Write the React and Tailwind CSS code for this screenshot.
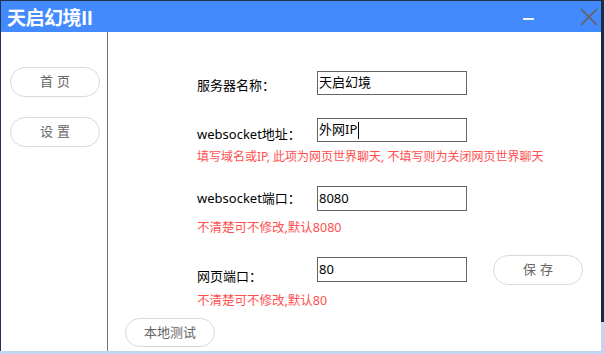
export default function App() {
  const font = { fontFamily: '"Noto Sans", "Noto Sans CJK SC", sans-serif' };
  return (
    <div className="w-[604px] h-[354px] bg-[#c3d4f1] relative overflow-hidden" style={font}>
      <div className="absolute right-0 top-0 w-[3px] h-[322px] bg-[#1d2a44]"></div>
      <div className="w-[601px] h-[351px] flex flex-col bg-white border-l border-t border-[#23314d]">
        {/* title bar */}
        <div className="h-[31px] bg-[#448aff] flex items-center shrink-0">
          <div className="pl-[6px] text-white font-bold text-[19px] leading-none tracking-[-0.5px] font-['Noto_Sans_CJK_SC',sans-serif]">天启幻境II</div>
          <div className="ml-auto mr-[46px] w-[11px] h-[2px] bg-[#f2f4f8] mt-[4px]"></div>
          <svg className="mr-[3px]" width="18" height="18" viewBox="0 0 18 18">
            <path d="M1 1 L17 17 M17 1 L1 17" stroke="#5f6670" strokeWidth="1.8" fill="none" />
          </svg>
        </div>
        <div className="flex flex-1 min-h-0">
          {/* sidebar */}
          <div className="w-[107px] shrink-0 border-r border-[#777777] flex flex-col items-start pl-[9px] pt-[35px] gap-[20px]">
            <button className="w-[90px] h-[30px] rounded-full border border-[#d9d9d9] text-[#666] text-[13px] tracking-[4px] pl-[4px]">首页</button>
            <button className="w-[90px] h-[30px] rounded-full border border-[#d9d9d9] text-[#666] text-[13px] tracking-[4px] pl-[4px]">设置</button>
          </div>
          {/* main */}
          <div className="flex-1 flex flex-col text-[13px] text-black">
            <div className="pl-[89px] pt-[39px] flex flex-col">
              <div className="flex items-center h-[24px]">
                <div className="w-[120px] pt-[6px]">服务器名称：</div>
                <div className="w-[150px] h-[24px] border border-[#646464] flex items-center pl-[1px]">天启幻境</div>
              </div>
              <div className="flex items-center h-[24px] mt-[23px]">
                <div className="w-[120px] pt-[10px]">websocket地址：</div>
                <div className="w-[150px] h-[24px] border border-[#646464] flex items-center pl-[1px]">
                  外网IP<span className="w-px h-[17px] bg-black ml-[1px]"></span>
                </div>
              </div>
              <div className="mt-[7px] h-[16px] leading-[16px] text-[#ff5050] text-[12px] whitespace-nowrap">填写域名或IP, 此项为网页世界聊天, 不填写则为关闭网页世界聊天</div>
              <div className="flex items-center h-[25px] mt-[21px]">
                <div className="w-[120px]">websocket端口：</div>
                <div className="w-[150px] h-[25px] border border-[#646464] flex items-center pl-[1px]">8080</div>
              </div>
              <div className="mt-[9px] h-[16px] leading-[16px] text-[#ff5050] text-[12.5px]">不清楚可不修改,默认8080</div>
              <div className="flex items-center h-[25px] mt-[21px]">
                <div className="w-[120px] pt-[15px]">网页端口：</div>
                <div className="w-[150px] h-[25px] border border-[#646464] flex items-center pl-[1px]">80</div>
                <button className="ml-[26px] w-[90px] h-[30px] rounded-full border border-[#d9d9d9] text-[#666] text-[13px] tracking-[4px] pl-[4px]">保存</button>
              </div>
              <div className="mt-[11px] h-[16px] leading-[16px] text-[#ff5050] text-[12.5px]">不清楚可不修改,默认80</div>
            </div>
            <button className="ml-[17px] mt-[9px] w-[90px] h-[29px] rounded-full border border-[#d9d9d9] text-[#666] text-[13px]">本地测试</button>
          </div>
        </div>
      </div>
    </div>
  );
}
